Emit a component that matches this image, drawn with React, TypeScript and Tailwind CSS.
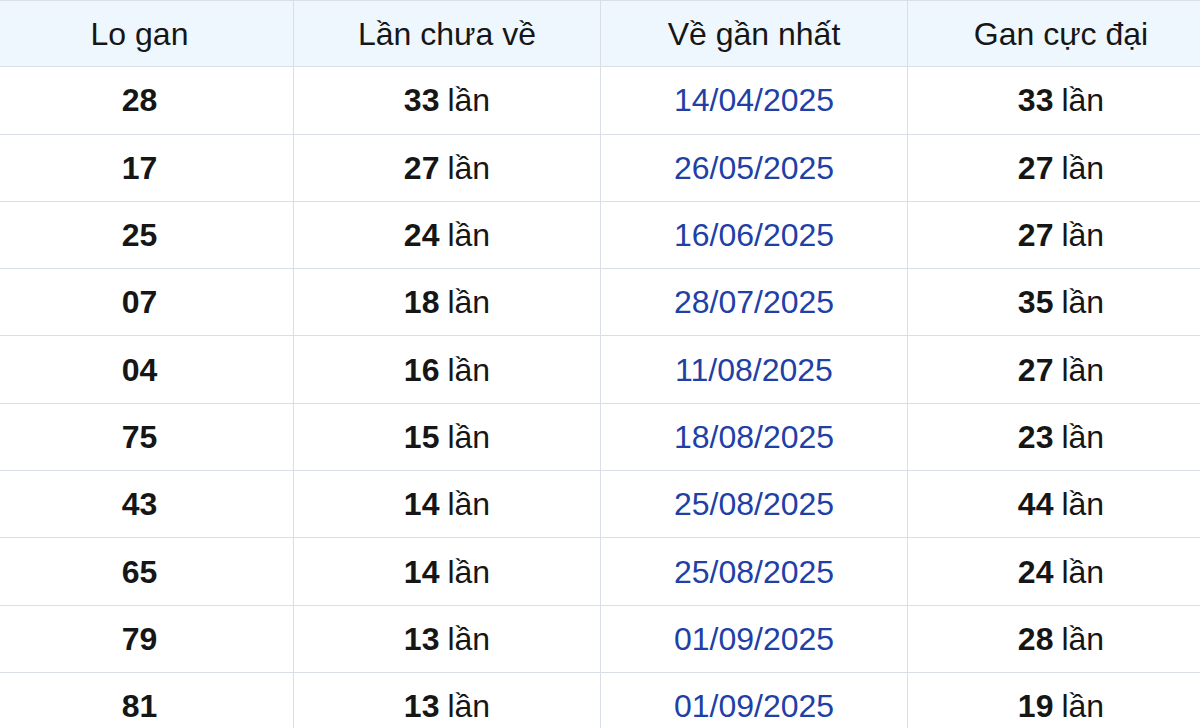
import React from "react";

const rows = [
    { lo: "28", chua: "33", date: "14/04/2025", max: "33" },
    { lo: "17", chua: "27", date: "26/05/2025", max: "27" },
    { lo: "25", chua: "24", date: "16/06/2025", max: "27" },
    { lo: "07", chua: "18", date: "28/07/2025", max: "35" },
    { lo: "04", chua: "16", date: "11/08/2025", max: "27" },
    { lo: "75", chua: "15", date: "18/08/2025", max: "23" },
    { lo: "43", chua: "14", date: "25/08/2025", max: "44" },
    { lo: "65", chua: "14", date: "25/08/2025", max: "24" },
    { lo: "79", chua: "13", date: "01/09/2025", max: "28" },
    { lo: "81", chua: "13", date: "01/09/2025", max: "19" },
];

const headers = ["Lo gan", "Lần chưa về", "Về gần nhất", "Gan cực đại"];

export default function App() {
    return (
        <div className="w-[1200px] h-[728px] overflow-hidden bg-white font-[Liberation_Sans,Arial,sans-serif] text-[32px] text-[#161616]">
            <div className="w-[1228px] -ml-[14px]">
                {/* Header */}
                <div className="grid grid-cols-4 h-[67.3px] bg-[#eef7fe] border-y border-[#dadfe5]">
                    {headers.map((h, i) => (
                        <div
                            key={h}
                            className={`flex items-center justify-center ${i > 0 ? "border-l border-[#dadfe5]" : ""}`}
                        >
                            {h}
                        </div>
                    ))}
                </div>

                {/* Rows */}
                {rows.map((r, idx) => (
                    <div key={idx} className="grid grid-cols-4 h-[67.3px] border-b border-[#dadfe5]">
                        <div className="flex items-center justify-center font-bold">{r.lo}</div>
                        <div className="flex items-center justify-center border-l border-[#dadfe5]">
                            <span className="font-bold">{r.chua}</span>
                            <span className="ml-2">lần</span>
                        </div>
                        <div className="flex items-center justify-center border-l border-[#dadfe5] text-[#2140a6]">
                            {r.date}
                        </div>
                        <div className="flex items-center justify-center border-l border-[#dadfe5]">
                            <span className="font-bold">{r.max}</span>
                            <span className="ml-2">lần</span>
                        </div>
                    </div>
                ))}
            </div>
        </div>
    );
}
